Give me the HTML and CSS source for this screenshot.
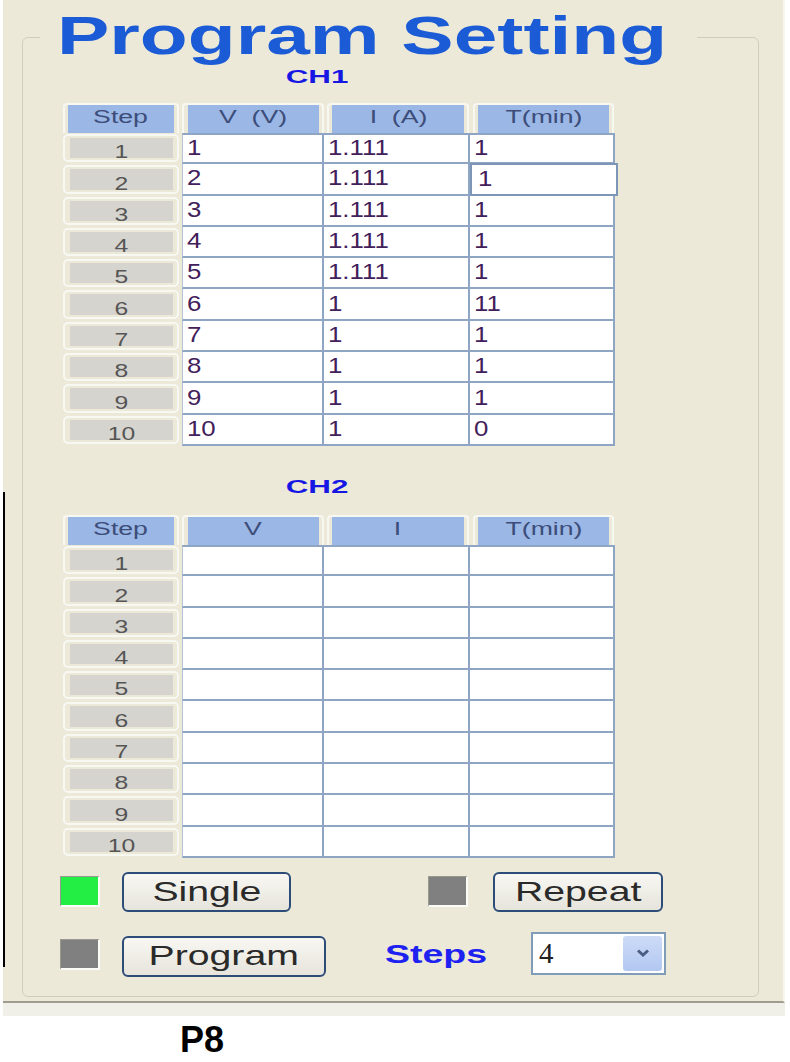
FILE: index.html
```html
<!DOCTYPE html>
<html lang="en">
<head>
  <meta charset="UTF-8">
  <title>Program Setting</title>
  <link rel="stylesheet" href="styles.css">
</head>
<body>
  <div class="window">
    <fieldset class="group">
      <legend><span>Program Setting</span></legend>
      <div class="channels">
        <div class="ch-label"><span>CH1</span></div>
        <div class="table" id="ch1">
          <div class="th step-h"><span class="fill"><span class="txt">Step</span></span></div>
          <div class="th first"><span class="fill"><span class="txt">V&nbsp; (V)</span></span></div>
          <div class="th"><span class="fill"><span class="txt">I&nbsp; (A)</span></span></div>
          <div class="th"><span class="fill"><span class="txt">T(min)</span></span></div>
        </div>

        <div class="ch-label ch2"><span>CH2</span></div>
        <div class="table" id="ch2">
          <div class="th step-h"><span class="fill"><span class="txt">Step</span></span></div>
          <div class="th first"><span class="fill"><span class="txt">V</span></span></div>
          <div class="th"><span class="fill"><span class="txt">I</span></span></div>
          <div class="th"><span class="fill"><span class="txt">T(min)</span></span></div>
        </div>

        <div class="controls">
          <div class="ctl-row">
            <span class="ind on"></span>
            <button class="btn single"><span>Single</span></button>
            <span class="ind gap-ind"></span>
            <button class="btn repeat"><span>Repeat</span></button>
          </div>
          <div class="ctl-row tall">
            <span class="ind"></span>
            <button class="btn program"><span>Program</span></button>
            <div class="steps-label"><span>Steps</span></div>
            <div class="combo">
              <span class="val">4</span>
              <span class="arrow">
                <svg width="16" height="10" viewBox="0 0 16 10"><path d="M3 2.5 L8 7 L13 2.5" fill="none" stroke="#4a5d82" stroke-width="3"/></svg>
              </span>
            </div>
          </div>
        </div>
      </div>
    </fieldset>
  </div>
  <div class="ledge"></div>
  <div class="caption">P8</div>

  <script>
    const ch1Rows = [
      ["1", "1.111", "1"],
      ["2", "1.111", "1"],
      ["3", "1.111", "1"],
      ["4", "1.111", "1"],
      ["5", "1.111", "1"],
      ["6", "1", "11"],
      ["7", "1", "1"],
      ["8", "1", "1"],
      ["9", "1", "1"],
      ["10", "1", "0"]
    ];

    // Build the 10 step rows of a channel table
    function fillTable(id, rows) {
      const table = document.getElementById(id);
      for (let i = 0; i < 10; i++) {
        const step = document.createElement("div");
        step.className = "sn";
        step.innerHTML = `<span class="fill"><span class="txt">${i + 1}</span></span>`;
        table.appendChild(step);

        const values = rows ? rows[i] : ["", "", ""];
        values.forEach((v, c) => {
          const cell = document.createElement("div");
          cell.className = "td";
          if (c === 0) cell.classList.add("first");
          if (i === 0) cell.classList.add("top");
          if (id === "ch1" && i === 1 && c === 2) cell.classList.add("edit");
          cell.innerHTML = `<span class="txt">${v}</span>`;
          table.appendChild(cell);
        });
      }
    }

    fillTable("ch1", ch1Rows);
    fillTable("ch2", null);
  </script>
</body>
</html>
```

FILE: styles.css
```css
body {
  margin: 0;
  background-color: #fff;
  font-family: "Liberation Sans", Arial, sans-serif;
}

.window {
  position: relative;
  box-sizing: border-box;
  width: 782px;
  height: 1003px;
  margin-left: 3px;
  padding-top: 11px;
  background-color: #ece9d8;
  border-bottom: 2px solid #9e9d90;
  border-right: 2px solid #f6f5ee;
}
.window::before {
  content: "";
  position: absolute;
  left: 0;
  top: 492px;
  width: 2px;
  height: 475px;
  background: #000;
}
.ledge {
  width: 782px;
  height: 13px;
  margin-left: 3px;
  background-color: #f1f0e8;
}
.caption {
  margin: 6px 0 0 180px;
  font-size: 36px;
  line-height: 36px;
  font-weight: bold;
  color: #000;
}

.group {
  box-sizing: border-box;
  width: 737px;
  height: 986px;
  margin: 0 0 0 19px;
  padding: 0;
  border: 1px solid #cfcebe;
  border-radius: 6px;
}
.group legend {
  width: 618px;
  margin-left: 17px;
  padding: 0 22px 0 17px;
  font-size: 53px;
  line-height: 53px;
  font-weight: bold;
  color: #1b5bd6;
}
.group legend span {
  display: inline-block;
  transform: translateY(-2px) scaleX(1.48);
  transform-origin: left center;
}

.channels {
  padding: 3px 0 0 40px;
}
.ch-label {
  width: 508px;
  text-align: center;
  font-size: 19px;
  line-height: 19px;
  font-weight: bold;
  color: #1717e4;
}
.ch-label span {
  display: inline-block;
  transform: scaleX(1.65);
}
.ch-label.ch2 {
  margin-top: 31.5px;
}

.table {
  display: grid;
  grid-template-columns: 119px 142px 146px 145px;
  grid-template-rows: 30px repeat(10, 31.3px);
  margin-top: 17px;
}
.ch2 + .table {
  margin-top: 18.5px;
}

/* header cells */
.th {
  box-sizing: border-box;
  margin: 0 1px 0 3px;
  padding: 0 3px;
  border: 2px solid #f8f8f2;
  border-bottom: none;
  border-radius: 4px 4px 0 0;
}
.th.first {
  margin: 0;
  padding: 0 3px 0 4px;
}
.th.step-h {
  margin: 0 3px 0 0;
}
.th .fill {
  display: flex;
  height: 100%;
  padding-bottom: 3px;
  box-sizing: border-box;
  align-items: center;
  justify-content: center;
  background-color: #9bb7e5;
  font-size: 18px;
  color: #3c4d7a;
}
.th .txt {
  display: inline-block;
  transform: scaleX(1.48);
  white-space: nowrap;
}

/* step number buttons */
.sn {
  box-sizing: border-box;
  margin: 1px 3px 2px 0;
  padding: 2px 4px 2px 5px;
  border: 2px solid #f8f8f3;
  border-radius: 5px;
}
.sn .fill {
  display: flex;
  height: 100%;
  align-items: flex-end;
  justify-content: center;
  background-color: #d6d4ce;
  font-size: 19px;
  line-height: 19px;
  color: #555;
}
.sn .txt {
  display: inline-block;
  margin-bottom: -3px;
  transform: scaleX(1.3);
}

/* data cells */
.td {
  box-sizing: border-box;
  display: flex;
  align-items: center;
  padding-left: 4px;
  background-color: #fff;
  border-right: 2px solid #8ea5c3;
  border-bottom: 2px solid #8ea5c3;
  font-size: 21.5px;
  color: #42205a;
}
.td.first {
  border-left: 1px solid #b3c3d8;
}
.td.top {
  border-top: 2px solid #8ea5c3;
}
.td.edit {
  margin: -1px -3px 0 0;
  padding-left: 6px;
  border: 2px solid #7d96b8;
}
.td .txt {
  display: inline-block;
  transform: scaleX(1.2);
  transform-origin: left center;
}

/* bottom controls */
.controls {
  margin: 14px 0 0 -3px;
}
.ctl-row {
  display: flex;
  align-items: center;
  height: 40px;
}
.ctl-row.tall {
  height: 45px;
  margin-top: 20px;
}
.ind {
  box-sizing: border-box;
  width: 40px;
  height: 31px;
  margin-right: 22px;
  background-color: #808080;
  border-top: 1px solid #9a998f;
  border-left: 1px solid #9a998f;
  border-right: 2px solid #fbfbf7;
  border-bottom: 2px solid #fbfbf7;
}
.ind.on {
  background-color: #22ee44;
}
.ind.gap-ind {
  margin-left: 137px;
  margin-right: 25px;
}
.btn {
  box-sizing: border-box;
  display: flex;
  align-items: center;
  justify-content: center;
  height: 40px;
  padding: 0;
  border: 2px solid #2d4d78;
  border-radius: 6px;
  background: linear-gradient(#f8f7f2, #e6e4db);
  font-family: "Liberation Sans", Arial, sans-serif;
  font-size: 28px;
  color: #2a2a2a;
}
.btn span {
  display: inline-block;
  transform: scaleX(1.4);
}
.btn.single {
  width: 169px;
}
.btn.repeat {
  width: 170px;
}
.btn.program {
  width: 204px;
  height: 41px;
  margin-top: 4px;
}
.steps-label {
  width: 103px;
  margin: 0 43px 0 59px;
  font-size: 25px;
  font-weight: bold;
  color: #1e22f0;
}
.steps-label span {
  display: inline-block;
  transform: scaleX(1.5);
  transform-origin: left center;
}
.combo {
  box-sizing: border-box;
  display: flex;
  align-items: center;
  width: 135px;
  height: 43px;
  margin-top: -2px;
  padding: 2px;
  border: 2px solid #7f9db9;
  background-color: #fff;
}
.combo .val {
  flex: 1;
  padding-left: 4px;
  font-family: "Liberation Serif", serif;
  font-size: 29px;
  color: #222;
}
.combo .arrow {
  display: flex;
  align-items: center;
  justify-content: center;
  width: 39px;
  height: 100%;
  border-radius: 3px;
  background: linear-gradient(#cddbf7, #b2c7f1);
}
```
